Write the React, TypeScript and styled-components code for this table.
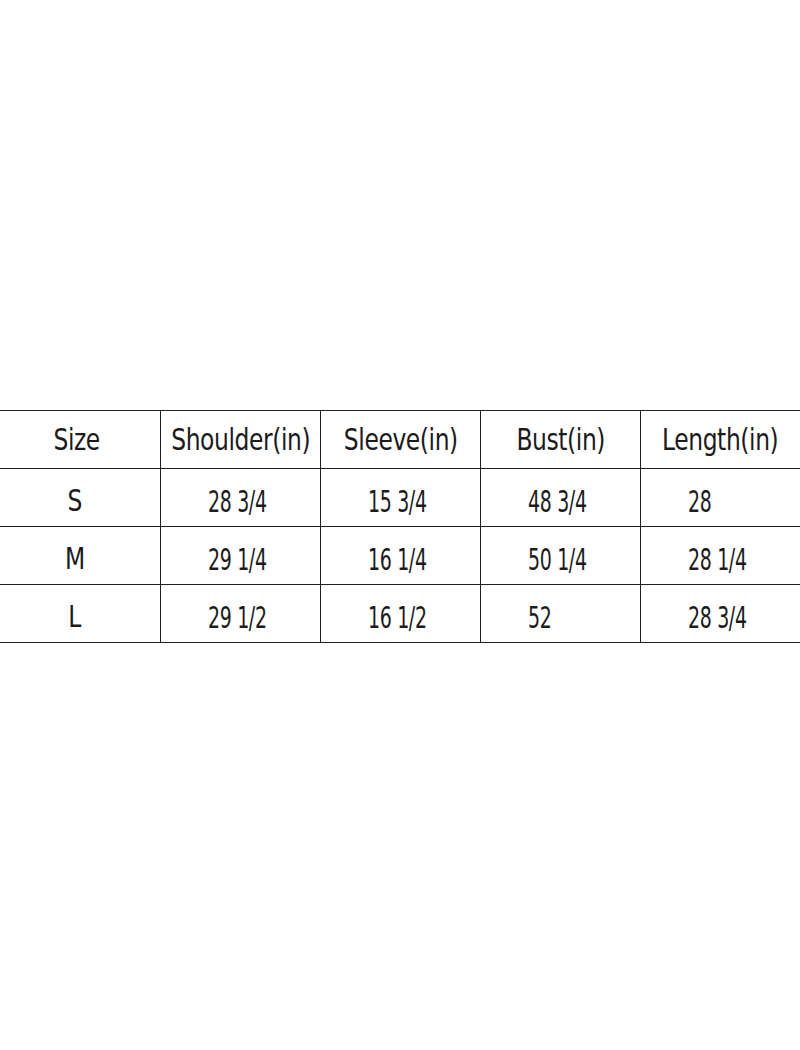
import styled, { createGlobalStyle } from 'styled-components'

const GlobalStyle = createGlobalStyle`
    body {
        margin: 0;
        background: #ffffff;
        font-family: 'DejaVu Sans Condensed', 'DejaVu Sans', sans-serif;
        color: #1c1a1b;
    }
`

const Page = styled.div`
    width: 800px;
    height: 1050px;
    padding-top: 410px;
    box-sizing: border-box;
    overflow: hidden;
`

const Table = styled.div`
    width: 800px;
    border-top: 1px solid #1e1e1e;
`

const Row = styled.div`
    display: grid;
    grid-template-columns: repeat(5, 160px);
    height: 58px;
    border-bottom: 1px solid #1e1e1e;
    box-sizing: border-box;
`

const Cell = styled.div<{ $align?: 'center' | 'left'; $shift?: number }>`
    display: flex;
    align-items: center;
    justify-content: ${(p) => (p.$align === 'left' ? 'flex-start' : 'center')};
    padding-left: ${(p) => (p.$align === 'left' ? '47px' : '0')};
    padding-right: ${(p) => p.$shift ?? 0}px;
    border-left: 1px solid #1e1e1e;
    box-sizing: border-box;
    &:first-child {
        border-left: none;
    }
`

const Text = styled.span<{ $squeeze: number; $left?: boolean; $drop?: number }>`
    display: inline-block;
    font-size: 31px;
    line-height: 1;
    white-space: nowrap;
    letter-spacing: -0.5px;
    transform: translateY(${(p) => p.$drop ?? 0}px) scaleX(${(p) => p.$squeeze});
    transform-origin: ${(p) => (p.$left ? 'left center' : 'center center')};
`

const headers = ['Size', 'Shoulder(in)', 'Sleeve(in)', 'Bust(in)', 'Length(in)']

const rows = [
    { size: 'S', values: ['28 3/4', '15 3/4', '48 3/4', '28'] },
    { size: 'M', values: ['29 1/4', '16 1/4', '50 1/4', '28 1/4'] },
    { size: 'L', values: ['29 1/2', '16 1/2', '52', '28 3/4'] },
]

export default function App() {
    return (
        <Page>
            <GlobalStyle />
            <Table>
                <Row>
                    {headers.map((h, i) => (
                        <Cell key={h} $shift={i === 0 ? 6 : 0}>
                            <Text $squeeze={0.84}>{h}</Text>
                        </Cell>
                    ))}
                </Row>
                {rows.map((r) => (
                    <Row key={r.size}>
                        <Cell $shift={10}>
                            <Text $squeeze={0.84} $drop={3}>
                                {r.size}
                            </Text>
                        </Cell>
                        {r.values.map((v, i) => (
                            <Cell key={i} $align="left">
                                <Text $squeeze={0.68} $left $drop={4}>
                                    {v}
                                </Text>
                            </Cell>
                        ))}
                    </Row>
                ))}
            </Table>
        </Page>
    )
}
